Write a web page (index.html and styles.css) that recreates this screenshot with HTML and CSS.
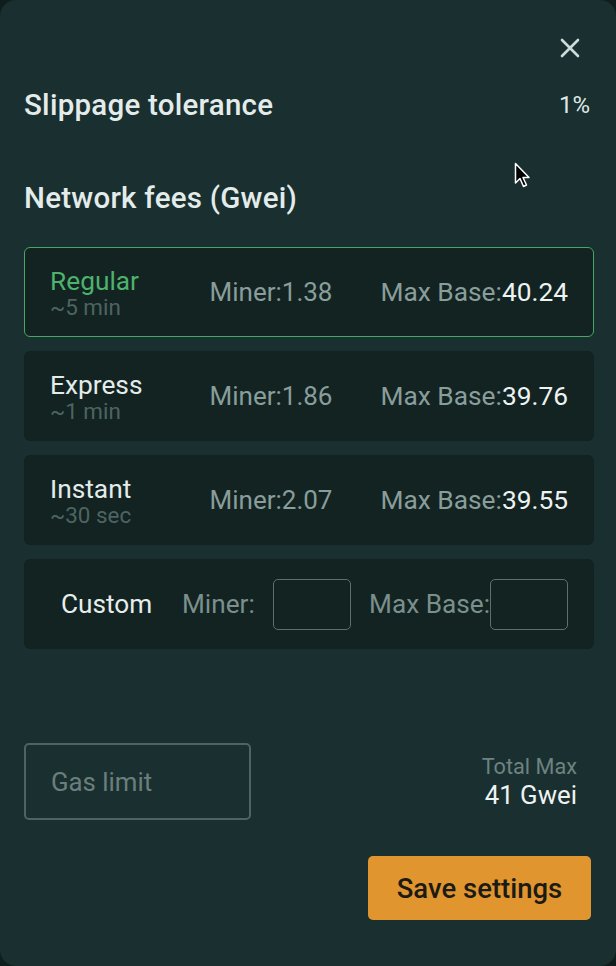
FILE: index.html
```html
<!DOCTYPE html>
<html>
<head>
<meta charset="utf-8">
<link rel="stylesheet" href="styles.css">
</head>
<body>
<div class="panel">
  <div class="top">
    <button class="close" aria-label="Close">
      <svg width="20" height="20" viewBox="0 0 20 20"><path d="M2 2 L18 18 M18 2 L2 18" stroke="#cfdbd8" stroke-width="2.6" stroke-linecap="round"/></svg>
    </button>
  </div>
  <div class="row slippage">
    <span class="title">Slippage tolerance</span>
    <span class="pct">1%</span>
  </div>
  <div class="title network">Network fees (Gwei)</div>
  <div class="cards">
    <div class="card active">
      <div class="name"><div class="label">Regular</div><div class="time">~5 min</div></div>
      <div class="miner">Miner:1.38</div>
      <div class="base">Max Base:<span class="val">40.24</span></div>
    </div>
    <div class="card">
      <div class="name"><div class="label">Express</div><div class="time">~1 min</div></div>
      <div class="miner">Miner:1.86</div>
      <div class="base">Max Base:<span class="val">39.76</span></div>
    </div>
    <div class="card">
      <div class="name"><div class="label">Instant</div><div class="time">~30 sec</div></div>
      <div class="miner">Miner:2.07</div>
      <div class="base">Max Base:<span class="val">39.55</span></div>
    </div>
    <div class="card custom">
      <div class="clabel">Custom</div>
      <div class="cfield first">Miner:<span class="box"></span></div>
      <div class="cfield second">Max Base:<span class="box"></span></div>
    </div>
  </div>
  <div class="footer">
    <div class="gas">Gas limit</div>
    <div class="total"><div class="tlabel">Total Max</div><div class="tval">41 Gwei</div></div>
  </div>
  <div class="actions">
    <button class="save">Save settings</button>
  </div>
  <svg class="cursor" width="20" height="28" viewBox="0 0 20 28"><path d="M1.5 1.5 L1.5 21 L6 16.5 L9.5 24.5 L12.5 23 L9 15.5 L15 15.5 Z" fill="#000" stroke="#fff" stroke-width="1.5" stroke-linejoin="round"/></svg>
</div>
</body>
</html>
```
FILE: styles.css
```css
* { box-sizing: border-box; }
html, body { margin: 0; padding: 0; background: #0f1d1d; }
body { font-family: Roboto, "Noto Sans", sans-serif; color: #dfe8e6; }
.panel {
  position: relative;
  width: 616px;
  height: 966px;
  background: #1a2f30;
  border-radius: 16px;
  padding: 38px 22px 0 24px;
  display: flex;
  flex-direction: column;
}
.top { display: flex; justify-content: flex-end; height: 20px; }
.close { background: none; border: 0; padding: 0; margin-right: 14px; width: 20px; height: 20px; cursor: pointer; }
.row { display: flex; justify-content: space-between; align-items: center; }
.slippage { margin-top: 29px; height: 36px; line-height: 36px; }
.title { font-size: 29.5px; font-weight: 500; color: #e3ecea; letter-spacing: 0.25px; }
.pct { font-size: 24px; color: #dfe8e6; margin-right: 4px; }
.network { margin-top: 57px; height: 36px; line-height: 36px; }
.cards { margin-top: 31px; display: flex; flex-direction: column; gap: 14px; }
.card {
  height: 90px;
  background: #122322;
  border-radius: 6px;
  border: 1px solid transparent;
  display: flex;
  align-items: center;
  padding: 0 25px 0 25px;
}
.card.active { border-color: #46a863; }
.name { width: 140px; padding-top: 1px; }
.label { font-size: 26.3px; color: #e4ecea; line-height: 28px; }
.card.active .label { color: #4db26b; }
.time { font-size: 22.4px; color: #4e6461; line-height: 24px; }
.miner { font-size: 26px; color: #899d9a; width: 162px; text-align: center; }
.base { font-size: 26.3px; color: #899d9a; margin-left: auto; }
.val { color: #eef3f2; }
.custom { padding-left: 36px; padding-right: 25px; }
.clabel { font-size: 26.2px; color: #e6eeec; width: 121px; }
.cfield { display: flex; align-items: center; font-size: 26.2px; color: #7b8f8c; }
.cfield.second { margin-left: auto; }
.box { display: inline-block; width: 78px; height: 51px; border: 1.5px solid #5b706d; border-radius: 5px; }
.cfield.first .box { margin-left: 18px; }
.footer { margin-top: 94px; display: flex; justify-content: space-between; align-items: center; padding-right: 17px; }
.gas {
  width: 227px; height: 77px;
  border: 2px solid #4e6462; border-radius: 5px;
  display: flex; align-items: center; padding-left: 25px;
  font-size: 25.8px; color: #6a7f7c;
}
.total { text-align: right; }
.tlabel { font-size: 21.7px; color: #6d8380; line-height: 26px; }
.tval { font-size: 25.8px; color: #eef3f2; line-height: 30px; }
.actions { margin-top: 36px; display: flex; justify-content: flex-end; padding-right: 3px; }
.save {
  width: 223px; height: 64px;
  background: #e0952e; border: 0; border-radius: 5px;
  font-family: Roboto, "Noto Sans", sans-serif;
  font-size: 27.5px; font-weight: 500; color: #1c1a15;
}
.cursor { position: absolute; left: 514px; top: 162px; }
```
